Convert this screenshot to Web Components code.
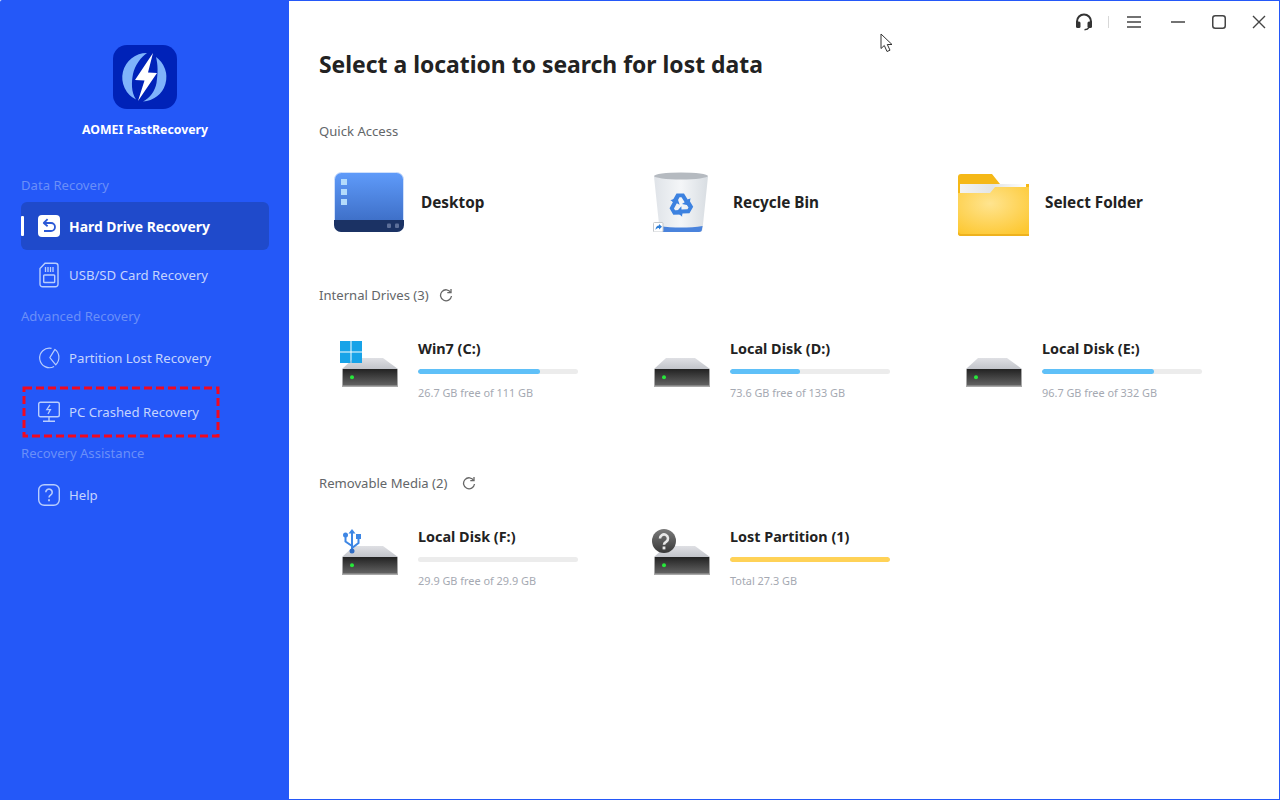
<!DOCTYPE html>
<html lang="en"><head><meta charset="utf-8"><title>AOMEI FastRecovery</title>
<style>
html,body{margin:0;height:100%;background:#fff}
body{font-family:"Noto Sans","Open Sans",sans-serif;overflow:hidden}
fr-app{width:1280px;height:800px}
</style></head><body>
<svg width="0" height="0" style="position:absolute">
<defs>
<linearGradient id="dt" x1="0" y1="0" x2="0" y2="1"><stop offset="0" stop-color="#5f9bfa"/><stop offset="1" stop-color="#3766bd"/></linearGradient>
</defs>
</svg>
<fr-app>
  <fr-sidebar slot="side">
    <fr-nav-label>Data Recovery</fr-nav-label>
    <fr-nav-item active>
      <svg slot="icon" width="22" height="22" viewBox="0 0 22 22"><rect width="22" height="22" rx="4" fill="#fff"/><path d="M9.600 4.200 5.800 8l3.800 3.200" fill="none" stroke="#2b59d6" stroke-width="1.800" stroke-linejoin="round"/><path d="M6.500 8H13a3.900 3.900 0 0 1 0 8H6" fill="none" stroke="#2b59d6" stroke-width="1.800"/></svg>
      Hard Drive Recovery
    </fr-nav-item>
    <fr-nav-item style="margin-top:1px">
      <svg slot="icon" width="22" height="26" viewBox="0 0 22 26" fill="none" stroke="#b9cefd" stroke-width="1.400"><path d="M7 1.200h10.500a2.500 2.500 0 0 1 2.500 2.500v18.600a2.500 2.500 0 0 1-2.500 2.500h-13a2.500 2.500 0 0 1-2.500-2.500V6.500z"/><rect x="5.700" y="13" width="11" height="7.500" rx=".8"/><path d="M7.500 5v5M10 5v5M12.500 5v5M15 5v5" stroke-width="1.300"/></svg>
      USB/SD Card Recovery
    </fr-nav-item>
    <fr-nav-label style="margin-top:7px">Advanced Recovery</fr-nav-label>
    <fr-nav-item style="margin-top:8px">
      <svg slot="icon" width="26" height="26" viewBox="0 0 26 26" fill="none" stroke="#b9cefd" stroke-width="1.400" stroke-linejoin="round"><path d="M16 1.700A11.500 11.500 0 1 0 19 23"/><path d="M20 2.800 14 12.500l7 8.500a12 12 0 0 0-1-18.200z"/></svg>
      Partition Lost Recovery
    </fr-nav-item>
    <fr-nav-item marked style="margin-top:6px">
      <svg slot="icon" width="22" height="22" viewBox="0 0 22 22" fill="none" stroke="#b9cefd" stroke-width="1.400"><rect x=".7" y="1.200" width="20.600" height="14.600" rx="1.800"/><path d="M11 16v4M5 20.300h12"/><path d="M12 3.800 8.800 8.600h3.600l-2.400 4.400" stroke-width="1.300"/></svg>
      PC Crashed Recovery
    </fr-nav-item>
    <fr-nav-label style="margin-top:7px">Recovery Assistance</fr-nav-label>
    <fr-nav-item style="margin-top:8px">
      <svg slot="icon" width="22" height="22" viewBox="0 0 22 22" fill="none" stroke="#b9cefd" stroke-width="1.400"><rect x=".7" y=".7" width="20.600" height="20.600" rx="5.500"/><path d="M7.800 8.200a3.200 3.200 0 1 1 5 2.700c-1.100.8-1.800 1.300-1.800 2.700" stroke-width="1.600"/><path d="M11 15.300v1.900" stroke-width="1.800"/></svg>
      Help
    </fr-nav-item>
  </fr-sidebar>
  <fr-main slot="main">
    <fr-window-controls></fr-window-controls>
    <fr-title>Select a location to search for lost data</fr-title>
    <fr-section-head style="margin-top:39px">Quick Access</fr-section-head>
    <fr-row style="margin-top:31px">
      <fr-quick-item>
        <svg slot="icon" width="70" height="60" viewBox="0 0 70 60"><rect x=".5" y=".5" width="69" height="59" rx="7" fill="url(#dt)" stroke="#cfe0fb"/><path d="M0 48h70v5a7 7 0 0 1-7 7H7a7 7 0 0 1-7-7z" fill="#1b3264"/><rect x="7" y="7" width="6" height="6" fill="#b3dbfb"/><rect x="7" y="17" width="6" height="6" fill="#b3dbfb"/><rect x="7" y="27" width="6" height="6" fill="#b3dbfb"/><rect x="53" y="51.500" width="4" height="4.500" rx="1" fill="#5d6f99"/><rect x="61" y="51.500" width="4" height="4.500" rx="1" fill="#5d6f99"/></svg>
        Desktop
      </fr-quick-item>
      <fr-quick-item>
        <svg slot="icon" width="70" height="60" viewBox="0 0 70 60"><defs><linearGradient id="bn" x1="0" x2="1" y1="0" y2="0"><stop offset="0" stop-color="#dfe3e8"/><stop offset=".5" stop-color="#f4f6f8"/><stop offset="1" stop-color="#d8dde2"/></linearGradient><path id="ra" d="M-9-3.500-4.500-11.500H3L6.800-5.200 9.500-6.800 8.200.5 1-1 3.700-2.700.5-7.800H-1.500L-4.800-1.500z"/></defs><path d="M8 4.500h54L56.500 57a3 3 0 0 1-3 3h-37a3 3 0 0 1-3-3z" fill="url(#bn)"/><ellipse cx="35" cy="4" rx="27" ry="3.500" fill="#b5bac0"/><path d="M14 54c12 2 30 2 42.600 0l-.6 3a3 3 0 0 1-3 3H17a3 3 0 0 1-3-3z" fill="#4a83dc"/><g transform="translate(35 33)" fill="#3d82e0"><use href="#ra"/><use href="#ra" transform="rotate(120)"/><use href="#ra" transform="rotate(240)"/></g><rect x="7.500" y="50.500" width="9.500" height="9.500" rx="1" fill="#fff" stroke="#c4c8cc"/><path d="M9.500 58c0-3 1.500-4.500 3.500-4.500V52l3 2.800-3 2.700v-1.500c-1.500 0-2.500.5-3.500 2z" fill="#2f7fd8"/></svg>
        Recycle Bin
      </fr-quick-item>
      <fr-quick-item>
        <svg slot="icon" width="70" height="60" viewBox="0 0 70 60" style="overflow:visible"><defs><radialGradient id="fd" cx=".45" cy=".35" r=".75"><stop offset="0" stop-color="#ffe48f"/><stop offset="1" stop-color="#fdc832"/></radialGradient><linearGradient id="pp" x1="0" x2="1" y1="0" y2="0"><stop offset="0" stop-color="#f3f3f3"/><stop offset=".5" stop-color="#e2e4e4"/><stop offset="1" stop-color="#fff"/></linearGradient></defs><path d="M0 5a3 3 0 0 1 3-3h31l8 10h29v52H3a3 3 0 0 1-3-3z" fill="#f5b817"/><rect x="2" y="12" width="66" height="12" fill="url(#pp)"/><path d="M0 21h32l5-6h34v47H3a3 3 0 0 1-3-3z" fill="url(#fd)"/><path d="M0 59v2a3 3 0 0 0 3 3h68v-2H3a3 3 0 0 1-3-3z" fill="#eeb21e"/></svg>
        Select Folder
      </fr-quick-item>
    </fr-row>
    <fr-section-head refresh style="margin-top:53px;--gap:10px">Internal Drives (3)</fr-section-head>
    <fr-row style="margin-top:34px">
      <fr-drive-item name="Win7 (C:)" used="76" info="26.7 GB free of 111 GB" badge="win"></fr-drive-item>
      <fr-drive-item name="Local Disk (D:)" used="44" info="73.6 GB free of 133 GB"></fr-drive-item>
      <fr-drive-item name="Local Disk (E:)" used="70" info="96.7 GB free of 332 GB"></fr-drive-item>
    </fr-row>
    <fr-section-head refresh style="margin-top:72px;--gap:15px">Removable Media (2)</fr-section-head>
    <fr-row style="margin-top:34px">
      <fr-drive-item name="Local Disk (F:)" used="0" info="29.9 GB free of 29.9 GB" badge="usb"></fr-drive-item>
      <fr-drive-item name="Lost Partition (1)" used="100" tone="#ffd257" info="Total 27.3 GB" badge="lost"></fr-drive-item>
    </fr-row>
    <fr-cursor></fr-cursor>
  </fr-main>
</fr-app>
<script>
function def(name, html, extra){
  const t=document.createElement('template');t.innerHTML=html;
  customElements.define(name,class extends HTMLElement{
    constructor(){super();this.attachShadow({mode:'open'}).appendChild(t.content.cloneNode(true));}
    connectedCallback(){if(extra)extra.call(this,this.shadowRoot);}
  });
}
def('fr-app',`<style>:host{display:flex;align-items:stretch}</style><slot name="side"></slot><slot name="main"></slot>`);
def('fr-sidebar',`<style>
:host{display:flex;flex-direction:column;width:289px;height:800px;box-sizing:border-box;background:#2458f8;padding:45px 20px 0 21px;border-top-left-radius:2px;flex:none}
.logo{align-self:center;width:64px;height:64px;display:block;margin-left:-1px}
.brand{margin:11px 0 35px 0;text-align:center;font:700 12.3px/20px "Noto Sans",sans-serif;color:#fff}
</style>
<svg class="logo" viewBox="0 0 64 64"><rect width="64" height="64" rx="14" fill="#0022b8"/><path d="M34 8A24.500 24.500 0 0 0 23 54.500C18 47 18.500 37 20 29 22 20 28 12 34 8z" fill="#7fb3fb"/><path d="M43 12A24.500 24.500 0 0 1 30 56.500C37 53 42 46 43.500 38 45 28 45 20 43 12z" fill="#7fb3fb"/><path d="M40 8 22 35l9.500.5L25 56 44 28l-9-.5z" fill="#fff"/></svg>
<div class="brand">AOMEI FastRecovery</div><slot></slot>`);
def('fr-nav-label',`<style>:host{display:block;font:400 13.100px/20px "Noto Sans",sans-serif;color:#6a8ff8}</style><slot></slot>`);
def('fr-nav-item',`<style>
:host{display:flex;position:relative;align-items:center;height:48px;box-sizing:border-box;padding-left:17px;margin-top:7px;border-radius:6px;font:400 13.200px/20px "Noto Sans",sans-serif;color:#c4d4fe}
:host([active]){background:#1f4acb;color:#fff;font-weight:700;font-size:13.900px;padding-top:2px}
:host([active]) .ic{margin-top:-2px}
:host([active]) .bar{display:block}
:host([marked]) .mark{display:block}
.bar{display:none;position:absolute;left:0;top:14px;width:3px;height:20px;background:#fff;border-radius:1px}
.ic{width:22px;height:26px;display:flex;align-items:center;justify-content:center;margin-right:9px;flex:none}
.mark{display:none;position:absolute;left:1px;top:-2px}
</style><span class="bar"></span><span class="ic"><slot name="icon"></slot></span><slot></slot>
<svg class="mark" width="198" height="53" viewBox="0 0 198 53"><rect x="2" y="2" width="194" height="48" fill="none" stroke="#f20820" stroke-width="3" stroke-dasharray="8 4"/></svg>`);
def('fr-main',`<style>:host{display:flex;flex-direction:column;position:relative;flex:1;height:800px;box-sizing:border-box;border:solid #2458f8;border-width:1px 1px 1px 0;padding-left:30px}</style><slot></slot>`);
def('fr-window-controls',`<style>
:host{display:flex;height:41px;align-items:center;justify-content:flex-end;gap:0;padding-right:13px}
svg{display:block}
.sep{width:1px;height:12px;background:#d8d8d8;margin:0 18px 0 15px}
</style>
<svg width="18" height="18" viewBox="0 0 18 18"><path d="M2 10V8.500a7 7 0 0 1 14 0V10" fill="none" stroke="#333" stroke-width="2"/><rect x="1" y="8.500" width="4.500" height="6.500" rx="1.500" fill="#333"/><rect x="12.500" y="8.500" width="4.500" height="6.500" rx="1.500" fill="#333"/><path d="M14 14.500c-1 1.800-2.500 2.200-4.500 2.200" fill="none" stroke="#333" stroke-width="1.500"/></svg>
<span class="sep"></span>
<svg width="14" height="12" viewBox="0 0 14 12" style="margin-right:30px" stroke="#444" stroke-width="1.500"><path d="M0 1h14M0 6h14M0 11h14"/></svg>
<svg width="14" height="14" viewBox="0 0 14 14" style="margin-right:27px" stroke="#444" stroke-width="1.500"><path d="M0 7h14"/></svg>
<svg width="14" height="14" viewBox="0 0 14 14" style="margin-right:26px" fill="none" stroke="#444" stroke-width="1.500"><rect x=".75" y=".75" width="12.500" height="12.500" rx="2.500"/></svg>
<svg width="14" height="14" viewBox="0 0 14 14" stroke="#444" stroke-width="1.400"><path d="M1 1l12 12M13 1 1 13"/></svg>`);
def('fr-title',`<style>:host{display:block;margin-top:6px;font:700 22.900px/34px "Noto Sans",sans-serif;color:#222}</style><slot></slot>`);
def('fr-section-head',`<style>
:host{display:flex;align-items:center;gap:var(--gap,10px);font:400 13.100px/20px "Noto Sans",sans-serif;color:#636669}
svg{display:none}:host([refresh]) svg{display:block}
</style><slot></slot><svg width="14" height="14" viewBox="0 0 14 14" fill="none" stroke="#666" stroke-width="1.300"><path d="M11.800 4.500A5.500 5.500 0 1 0 12.500 8"/><path d="M12 1v3.700H8.300"/></svg>`);
def('fr-row',`<style>:host{display:grid;grid-template-columns:repeat(3,312px)}</style><slot></slot>`);
def('fr-quick-item',`<style>
:host{display:flex;align-items:center;height:60px;padding-left:15px;font:700 15.300px/20px "Noto Sans",sans-serif;color:#222}
.ic{width:70px;height:60px;margin-right:17px;flex:none}
</style><span class="ic"><slot name="icon"></slot></span><slot></slot>`);
const badges={
 win:`<g><path d="M0 1h10.500v10.500H0z M11.500 1H22v10.500H11.500z M0 12.500h10.500V23H0z M11.500 12.500H22V23H11.500z" fill="#17a3e8"/></g>`,
 usb:`<g transform="translate(2 0)" fill="none" stroke="#3d86e4" stroke-width="2"><path d="M10 3v20"/><path d="M10 17 3.500 12.500V7M10 19l6.500-5V8"/><circle cx="3.500" cy="6" r="2.500" fill="#3d86e4" stroke="none"/><rect x="14" y="5" width="5" height="5" fill="#3d86e4" stroke="none"/><path d="M10 0l3.500 4.500h-7z" fill="#3d86e4" stroke="none"/><circle cx="10" cy="22" r="2.500" fill="#2f6cc4" stroke="none"/></g>`,
 lost:`<g><circle cx="12" cy="12" r="12" fill="url(#lq)"/><path d="M8 9.500a4 4 0 1 1 6.300 3.200c-1.500 1-2.300 1.700-2.300 3" fill="none" stroke="#e8e8e8" stroke-width="2.600"/><path d="M12 17.500v2.900" stroke="#e8e8e8" stroke-width="2.800"/></g>`
};
let uid=0;
customElements.define('fr-drive-item',class extends HTMLElement{
 constructor(){super();this.attachShadow({mode:'open'});}
 connectedCallback(){
  const a=n=>this.getAttribute(n)||'';
  const b=a('badge');
  this.shadowRoot.innerHTML=`<style>
:host{display:flex;padding-left:21px;width:312px;box-sizing:border-box}
svg{display:block;margin-top:1px;flex:none;margin-right:18px;overflow:visible}
.info{width:160px}
.name{font:700 14.400px/20px "Noto Sans",sans-serif;color:#222;white-space:nowrap}
.track{height:5px;border-radius:3px;background:#ececec;margin-top:10px;overflow:hidden}
.fill{height:100%;border-radius:3px;background:${a('tone')||'#5fc0f8'};width:${a('used')}%}
.txt{font:400 10.900px/16px "Noto Sans",sans-serif;color:#a5a9b2;margin-top:11px;white-space:nowrap}
</style>
<svg width="60" height="48" viewBox="0 0 60 48"><defs>
<linearGradient id="lq" x1="0" y1="0" x2="0" y2="1"><stop offset="0" stop-color="#7a7a7a"/><stop offset="1" stop-color="#383838"/></linearGradient>
<linearGradient id="tp${++uid}" x1="0" y1="0" x2="0" y2="1"><stop offset="0" stop-color="#dfe0e4"/><stop offset="1" stop-color="#c2c4ca"/></linearGradient>
<linearGradient id="bd${uid}" x1="0" y1="0" x2="0" y2="1"><stop offset="0" stop-color="#222"/><stop offset="1" stop-color="#636363"/></linearGradient></defs>
<path d="M14 18h29l15 11H2z" fill="url(#tp${uid})"/>
<rect x="2" y="29" width="56" height="18" fill="#a8a8a8"/><rect x="3" y="29" width="54" height="16.500" fill="url(#bd${uid})"/>
<circle cx="12" cy="37.300" r="2" fill="#27e83a"/>
${b==='usb'?'<g transform="translate(0 1)">'+badges.usb+'</g>':b==='lost'?'<g transform="translate(0 1)">'+badges.lost+'</g>':b==='win'?badges.win:''}
</svg>
<div class="info"><div class="name">${a('name')}</div><div class="track"><div class="fill"></div></div><div class="txt">${a('info')}</div></div>`;
 }
});
def('fr-cursor',`<style>:host{position:absolute;left:591px;top:32px;width:14px;height:20px}</style>
<svg width="14" height="20" viewBox="0 0 14 20"><path d="M1 1v14.500l3.300-3 2.700 6 3-1.300-2.700-5.700H12z" fill="#fff" stroke="#333" stroke-width="1" stroke-linejoin="round"/></svg>`);
</script>
</body></html>
